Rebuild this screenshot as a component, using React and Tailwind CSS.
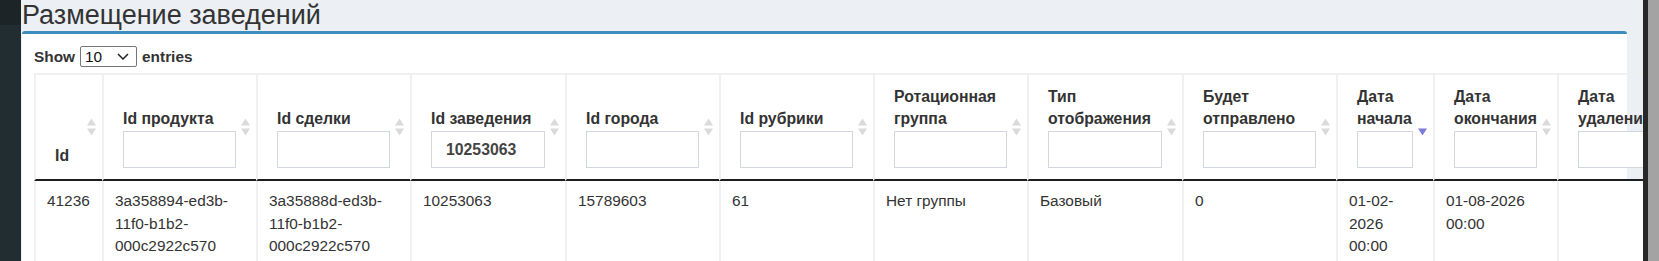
import React from 'react';

// columns of the placements table; widths come from the grid template below
const columns = [
  { title: 'Id', filter: false },
  { title: 'Id продукта' },
  { title: 'Id сделки' },
  { title: 'Id заведения', value: '10253063' },
  { title: 'Id города' },
  { title: 'Id рубрики' },
  { title: 'Ротационная группа' },
  { title: 'Тип отображения' },
  { title: 'Будет отправлено' },
  { title: 'Дата начала', sort: 'desc' },
  { title: 'Дата окончания' },
  { title: 'Дата удаления' },
];

const row = [
  '41236',
  '3a358894-ed3b-11f0-b1b2-000c2922c570',
  '3a35888d-ed3b-11f0-b1b2-000c2922c570',
  '10253063',
  '15789603',
  '61',
  'Нет группы',
  'Базовый',
  '0',
  '01-02-2026 00:00',
  '01-08-2026 00:00',
  '',
];

function SortIcon({ dir }) {
  return (
    <svg
      width="9"
      height="17"
      viewBox="0 0 9 17"
      className="absolute right-[6px] top-1/2 -translate-y-1/2"
    >
      {dir !== 'desc' && <path d="M4.5 0 L9 7 L0 7 Z" fill="#dadada" />}
      <path d="M0 10 L9 10 L4.5 17 Z" fill={dir === 'desc' ? '#7c7cd9' : '#dadada'} />
    </svg>
  );
}

export default function App() {
  return (
    <div
      className="flex h-[261px] w-full overflow-hidden bg-[#ecf0f5] text-[#333]"
      style={{ fontFamily: '"Liberation Sans", Arial, sans-serif' }}
    >
      {/* sidebar edge */}
      <div className="flex w-[21px] shrink-0 flex-col">
        <div className="h-[25px] bg-[#1c2428]" />
        <div className="flex-1 bg-[#222d32]" />
      </div>

      {/* content */}
      <div className="min-w-0 flex-1 overflow-hidden">
        <h1 className="mt-[1px] pl-[1px] text-[27px] font-normal leading-[28px] text-[#333]">
          Размещение заведений
        </h1>

        <div className="ml-[1px] mr-[16px] mt-[2px] h-[400px] rounded-t-[3px] border-t-[3px] border-[#3c8dbc] bg-white pl-[12px] pt-[12px]">
          {/* length menu */}
          <div className="flex h-[21px] items-center gap-[5px] text-[15.4px] font-bold">
            <span>Show</span>
            <div className="flex h-[21px] w-[57px] items-center justify-between rounded-[2px] border border-[#767676] bg-white pl-[4px] pr-[7px]">
              <span className="font-normal text-[#111]">10</span>
              <svg width="12" height="7" viewBox="0 0 12 7">
                <path d="M1 1 L6 6 L11 1" stroke="#222" strokeWidth="1.5" fill="none" />
              </svg>
            </div>
            <span>entries</span>
          </div>

          {/* table */}
          <div className="mt-[6px] grid w-max grid-cols-[68px_154px_154px_155px_154px_154px_154px_155px_154px_97px_124px_140px]">
            {columns.map((c) => (
              <div
                key={c.title}
                className={`relative flex flex-col justify-end border-b-2 border-l-2 border-t-2 border-b-[#1e1e1e] border-l-[#f0f0f0] border-t-[#f0f0f0] pl-[19px] pr-[20px] pt-[11px] ${
                  c.filter === false ? 'pb-[12px]' : 'pb-[11px]'
                }`}
              >
                <span className="text-[15.8px] font-bold leading-[22px] text-[#333]">{c.title}</span>
                {c.filter !== false && (
                  <input
                    readOnly
                    value={c.value || ''}
                    className="mt-[1px] h-[37px] w-full border border-[#d2d6de] bg-white pl-[14px] text-[15.8px] font-bold text-[#444] outline-none"
                  />
                )}
                <SortIcon dir={c.sort} />
              </div>
            ))}

            {row.map((v, i) => (
              <div
                key={i}
                className="h-[90px] border-l-2 border-[#f0f0f0] bg-white px-[11px] pt-[9px] text-[15.4px] leading-[22.5px] text-[#333]"
              >
                {v}
              </div>
            ))}
          </div>
        </div>
      </div>

      {/* window scrollbar */}
      <div className="flex w-[16px] shrink-0">
        <div className="w-[5px] bg-[#282828]" />
        <div className="flex-1 bg-[#a3a3a3]" />
      </div>
    </div>
  );
}
